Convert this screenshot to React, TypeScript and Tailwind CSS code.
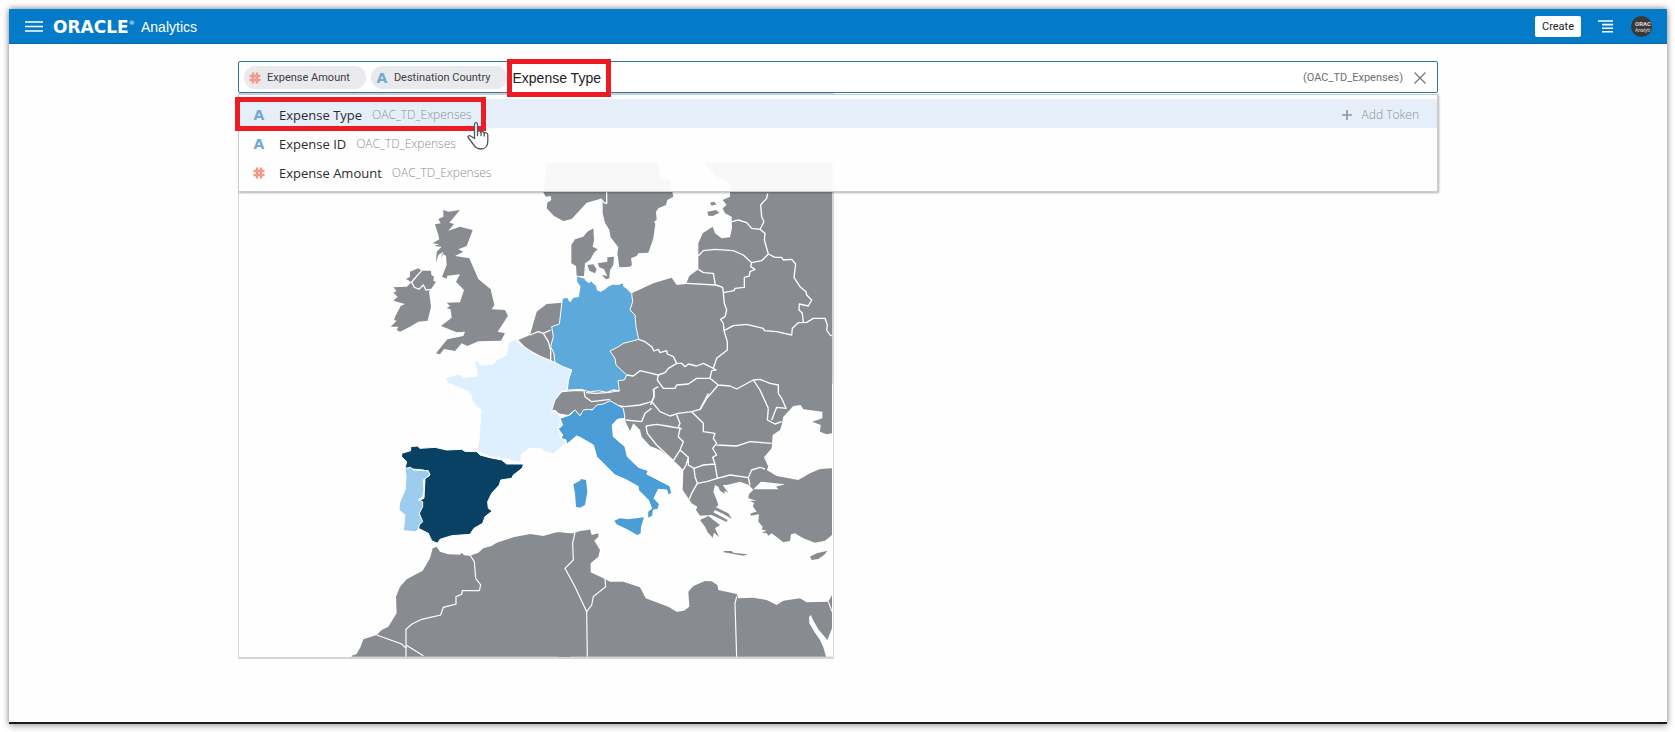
import React, { useState } from "react";

const LAND = "#888b90";
const SEA = "#fefefe";

function LetterIcon() {
  return (
    <span aria-hidden="true" className="font-['DejaVu_Sans',sans-serif] text-sm leading-4 font-bold text-[#72a9d0]">
      A
    </span>
  );
}

function NumberIcon() {
  return (
    <svg aria-hidden="true" viewBox="0 0 12 12" className="h-3 w-3" stroke="#f2998c" strokeWidth="2.4" fill="none">
      <path d="M4 0.5V11.5M8 0.5V11.5M0.5 4H11.5M0.5 8H11.5" />
    </svg>
  );
}

function FieldIcon({ kind }: { kind: "text" | "number" }) {
  return (
    <span className="flex w-3 shrink-0 items-center justify-center">
      {kind === "text" ? <LetterIcon /> : <NumberIcon />}
    </span>
  );
}

function Token({ kind, label }: { kind: "text" | "number"; label: string }) {
  return (
    <span className="flex h-[23px] shrink-0 items-center gap-[6px] rounded-full bg-[#e9eaed] pr-4 pl-[5px]">
      <FieldIcon kind={kind} />
      <span className="text-[11px] leading-4 whitespace-nowrap text-[#404040]">{label}</span>
    </span>
  );
}

const suggestions: { kind: "text" | "number"; name: string }[] = [
  { kind: "text", name: "Expense Type" },
  { kind: "text", name: "Expense ID" },
  { kind: "number", name: "Expense Amount" },
];

function EuropeMap() {
  return (
    <svg viewBox="239 94 594 563" className="block w-full" role="img" aria-label="Map of Europe">
      {/* British Isles */}
      <g transform="translate(230 180) scale(0.33333)" fill={LAND}>
        <polygon points="640,90 655,95 690,90 658,128 672,132 655,152 690,140 728,150 710,198 685,208 700,215 675,228 718,235 745,297 782,328 793,375 785,388 825,390 834,407 803,455 825,460 813,482 745,484 712,498 695,490 675,513 642,507 630,523 618,520 652,478 700,468 705,455 680,457 633,438 665,413 662,388 650,385 660,378 650,368 690,367 702,330 678,305 690,283 652,287 650,296 636,290 650,255 648,228 640,222 632,235 640,215 625,225 618,248 620,215 635,200 612,198 628,193 608,190 628,178 625,165 615,133 632,130 625,117 640,110" />
        <polygon points="490,322 530,320 545,307 528,297 540,290 540,275 565,265 575,272 603,272 604,285 612,290 610,303 618,305 605,325 597,335 603,380 593,422 565,425 540,440 510,455 500,450 505,440 482,440 500,422 492,420 498,405 512,378 525,372 490,362 503,350 490,338 500,333" />
        <path d="M575,272L550,300L545,307L553,322L567,328L580,315L588,330L605,328" fill="none" stroke="#fff" strokeWidth="4" />
      </g>

      {/* Northern and central Europe */}
      <g transform="translate(530 150) scale(0.33333)" fill={LAND}>
        <polygon points="50,38 385,38 390,80 420,90 430,140 412,150 408,165 385,175 378,185 380,210 372,215 376,222 370,265 355,308 325,310 320,318 303,325 306,345 300,350 268,352 262,310 265,292 242,262 238,240 225,218 218,190 218,158 212,146 170,158 150,180 125,207 100,213 72,198 50,175 52,158 64,150 62,138 47,140 40,127" />
        <polygon points="190,235 192,270 188,290 203,298 192,308 180,330 165,340 162,378 140,378 138,348 124,340 124,285 135,268 160,260 172,245" />
        <polygon points="172,345 190,343 200,358 195,370 178,362" />
        <polygon points="203,340 232,335 232,322 252,320 250,345 240,360 238,385 228,388 215,375 232,378 222,358 208,352" />
        <polygon points="540,158 552,155 560,163 545,167" />
        <polygon points="532,185 558,180 568,188 548,198 535,197" />
        <polygon points="520,38 907,38 907,700 880,760 40,780 65,760 112,720 62,636 0,600 -15,590 -35,570 0,555 20,485 50,462 97,458 120,470 200,440 305,430 370,400 425,383 440,405 468,402 478,378 505,358 505,280 518,250 548,230 555,250 575,265 600,262 606,235 605,200 595,195 585,190 578,175 590,165 578,150 600,140 600,100 560,80" />
      </g>

      {/* Switzerland */}
      <g transform="translate(380 330) scale(0.33333)" fill={LAND}>
        <polygon points="545,185 620,180 700,200 700,215 650,225 625,240 610,240 600,257 585,238 565,255 535,250 525,238 515,242 525,210" />
      </g>

      {/* Balkans, Turkey, Greece and the Black Sea */}
      <g transform="translate(560 370) scale(0.33333)" fill={LAND}>
        <polygon points="150,0 816,0 816,190 800,193 780,185 782,165 757,155 787,145 787,125 730,118 722,105 700,108 670,140 665,165 660,180 638,195 635,235 612,262 625,290 620,300 650,318 715,330 750,310 780,297 816,295 816,495 795,512 765,518 730,505 705,490 693,493 690,513 670,517 635,490 625,497 620,490 605,488 620,482 605,478 608,470 595,455 597,433 572,437 572,430 590,425 578,408 583,400 570,392 590,392 565,385 567,372 580,360 567,345 540,335 500,345 488,345 505,368 493,362 495,371 480,362 475,350 465,345 460,365 470,390 475,405 468,412 505,430 516,447 490,432 465,420 460,427 503,450 500,456 455,435 420,437 408,420 412,410 395,400 385,385 368,360 370,300 345,275 300,240 270,228 245,200 240,180 220,160 210,183 197,155 190,120" />
        <polygon points="420,450 445,438 480,465 465,475 477,501 462,488 458,503 443,487 435,470" />
        <polygon points="490,543 515,543 520,548 563,553 550,557 492,547" />
        <polygon points="750,560 770,550 803,542 792,555 775,567 755,570" />
        <polygon points="580,358 603,335 675,343 648,350 655,358" fill={SEA} />
      </g>

      {/* North Africa */}
      <g transform="translate(230 500) scale(0.33333)" fill={LAND}>
        <polygon points="365,467 380,462 392,440 400,418 440,405 455,390 475,380 500,340 498,290 510,260 530,238 578,212 600,175 608,145 620,140 630,155 655,163 690,164 696,158 702,166 720,167 745,158 760,145 785,138 800,128 850,112 900,102 940,108 980,97 1020,100 1020,470 365,470" />
        <path d="M720,165L733,185L737,235L752,255L748,272L697,272L695,283L678,290L678,312L640,322L632,345L575,358L545,373L528,388L528,470M440,405L515,432L528,445M528,435L580,467" fill="none" stroke="#fff" strokeWidth="3.5" />
      </g>
      <g transform="translate(560 370) scale(0.33333)" fill={LAND}>
        <polygon points="-5,487 25,490 40,490 60,483 85,480 90,478 95,495 115,490 115,500 103,512 120,540 115,560 92,580 92,607 135,627 150,635 190,635 240,652 257,685 325,710 350,725 372,722 388,710 385,665 400,648 435,633 455,634 472,645 475,660 530,672 535,685 580,683 620,690 650,705 670,692 720,685 740,697 805,695 816,675 816,860 -5,860" />
        <path d="M45,487L38,520L40,570L15,595L45,650L80,725L82,860M135,627L137,650L100,680L95,705L80,725M530,680L525,700L530,860M805,695L816,725" fill="none" stroke="#fff" strokeWidth="3.5" />
      </g>
      <g transform="translate(740 560) scale(0.33333)" fill={SEA}>
        <polygon points="207,170 213,165 218,178 235,208 262,240 276,205 276,290 258,290 250,262 240,240 225,218 208,190" />
      </g>

      {/* Country borders */}
      <g fill="none" stroke="#fff" strokeWidth="4" strokeLinejoin="round">
        <path
          transform="translate(530 150) scale(0.33333)"
          d="M230,125L230,160L222,158L212,146M0,555L25,545L40,550L62,540M40,550L55,575L62,600L62,635M468,400L558,405L578,412M505,358L520,368L550,370L556,405M505,318L520,302L555,298L610,302L640,315L665,338M606,215L625,210L650,218L665,235L690,238M713,130L710,145L692,165L695,200L702,215L690,238L705,250L703,270L715,312L695,332L665,338M715,312L735,322L755,322L760,330L785,328L797,342L792,382L810,410L828,425L830,435L845,450L835,468L808,462L807,480L817,490L820,517M665,338L662,350L675,358L660,365L658,378L643,382L643,412L615,415L612,422L580,428M578,412L580,428L583,460L590,480L585,500L572,508L580,520L582,542L610,527L650,523L700,535L703,542L740,545L785,555L787,535L805,518L830,517L850,505L885,505L892,525L890,540L900,555L907,558M582,542L592,575L592,600L560,625L550,655M326,568L345,575L365,590L372,603L385,598L390,608L410,602L412,612L430,620L440,640L455,640L465,650L475,642L500,648L520,640L550,655M440,640L415,655L405,668L385,675M290,675L310,678L330,662L355,668L385,675L382,690L400,715L435,715L440,705L475,702L500,685L540,685M550,655L558,660L545,662L540,685L565,705L530,745L510,780M385,710L370,718L372,740L362,765M565,705L600,708L620,717L670,690L690,688L720,700L745,705L745,730L755,745L768,775M670,690L690,720L715,775"
        />
        <path
          transform="translate(560 370) scale(0.33333)"
          d="M160,105L195,110L240,105L275,95L282,80L282,60M275,95L300,125L330,138L355,130L395,125L420,118L445,70M197,150L245,155L255,130L275,115M350,135L360,160L355,170L365,178M258,168L290,163L320,168L360,175L355,200L370,215L360,240L340,272M258,168L262,190L290,225L340,272M395,125L430,160L430,185L465,190L460,205L470,220L458,235L470,255L458,262L465,282M470,225L530,228L570,215L635,220M360,240L385,262L378,285L370,300M385,262L385,285L402,295L405,320L412,340L395,370L388,388M402,295L430,285L465,282L472,325L440,335L412,340M472,325L510,315L565,323L575,300L600,292L615,297M565,323L570,345M625,115L622,150L645,162L665,155M680,115L650,112L635,150"
        />
      </g>

      {/* Countries with expenses */}
      <g stroke="#fff" strokeWidth="3" strokeLinejoin="round">
        <polygon
          transform="translate(530 150) scale(0.33333)"
          fill="#5ea9dc"
          points="140,378 165,385 168,392 178,398 182,392 200,408 202,420 212,424 228,415 235,408 250,402 262,404 282,398 280,408 290,415 305,430 308,455 300,480 315,495 318,530 326,568 300,575 280,580 262,592 240,603 255,625 258,645 290,675 283,690 264,692 268,722 235,728 205,722 180,726 155,718 112,720 115,690 125,660 90,655 75,640 72,610 62,590 70,560 65,530 88,522 92,490 97,445 112,442 120,455 130,442 145,440 150,410 140,395"
        />
        <g transform="translate(380 330) scale(0.33333)">
          <polygon
            fill="#deeffe"
            points="385,40 405,27 415,38 430,50 460,70 525,97 545,108 575,120 565,150 560,182 545,185 525,210 515,242 535,250 545,270 535,295 545,325 558,338 520,372 495,365 485,357 450,355 425,372 422,397 380,388 330,380 290,362 297,330 303,240 285,225 275,210 275,197 265,185 235,172 205,160 195,145 235,132 255,142 292,137 290,118 282,92 297,95 300,105 340,102 350,90 380,75"
          />
          <polygon
            fill="#084163"
            points="65,370 92,362 92,350 112,348 120,355 165,352 200,360 245,358 255,364 290,365 300,375 330,383 365,390 380,402 430,402 428,412 420,420 400,435 395,445 362,450 358,465 335,490 323,515 325,535 337,543 315,560 308,580 282,595 270,613 215,617 180,628 172,640 155,632 145,610 115,595 120,510 132,505 135,445 150,435 130,420 75,415 80,395 65,380"
          />
          <polygon
            fill="#9dcdee"
            points="75,415 92,412 100,420 145,422 150,435 130,450 132,480 128,500 115,510 128,515 128,530 118,550 128,575 118,585 115,600 105,605 70,602 75,555 57,540 58,520 75,480 78,440"
          />
          <polygon
            fill="#4a9dd6"
            points="600,257 610,240 625,238 637,240 650,225 670,222 690,212 730,235 735,265 712,268 697,285 700,320 735,350 742,380 775,412 805,422 800,432 870,468 875,490 865,495 860,480 835,478 822,505 838,522 835,537 820,540 818,558 803,565 803,545 815,535 805,510 775,480 775,470 740,450 705,435 650,380 640,345 600,322 590,318 560,343 558,330 543,325 548,315 535,297 548,285 540,265 570,255 585,240"
          />
          <polygon fill="#4a9dd6" stroke="none" points="580,463 600,452 603,447 618,450 622,485 615,525 600,533 588,530 585,490" />
          <polygon fill="#4a9dd6" stroke="none" points="703,572 720,565 745,568 792,562 783,590 782,610 772,615 740,597 710,583" />
          <path
            fill="none"
            strokeWidth="4"
            d="M545,185L580,182L612,182L615,200L635,215L690,208M618,188L645,190L680,188L700,180L718,183"
          />
        </g>
      </g>
    </svg>
  );
}

function HandCursor() {
  return (
    <svg
      aria-hidden="true"
      viewBox="0 0 22 29"
      className="pointer-events-none absolute top-[60px] left-[229px] z-30 h-[29px] w-[22px]"
      fill="#fff"
      stroke="#55565c"
      strokeWidth="1.3"
      strokeLinejoin="round"
      strokeLinecap="round"
    >
      <path d="M7.5 17.500V3.500C7.500 1 10.500 1 10.500 3.500V11C11 9.500 14 9.500 14 11.500C14.500 10 17 10.500 17.200 12.500C18 11 20.800 11.500 20.800 14V20C20.800 25 18 28 14 28C10 28 8.500 26.500 6 23L1.200 16.500C.5 15 2.500 14 4 15.200Z" />
      <path d="M10.500 11V14.500M14 11.500V14.500M17.200 12.500V15" fill="none" />
    </svg>
  );
}

export default function App() {
  const [query, setQuery] = useState("Expense Type");

  return (
    <div className="flex min-h-screen bg-white pt-[9px] pr-2 pb-2 pl-[9px] font-['Roboto','Liberation_Sans',sans-serif]">
      <div className="flex flex-1 flex-col border-b-2 border-[#1b1b1d] bg-[#fefefe] shadow-[0_-1px_6px_rgba(0,0,0,0.4),0_3px_7px_rgba(0,0,0,0.2)]">
        <header className="flex h-[35px] items-center border-b border-[#0a68a8] bg-[#047bc9] pt-px pr-[15px] pl-4">
          <button type="button" aria-label="Navigator" className="flex h-5 w-[18px] items-center">
            <svg viewBox="0 0 18 11" className="h-[11px] w-[18px]" stroke="#fff" strokeWidth="1.5">
              <path d="M0 1H18M0 5.500H18M0 10H18" />
            </svg>
          </button>
          <div className="ml-[10px] flex w-[88px] items-center font-['DejaVu_Sans',sans-serif] text-[17px] leading-5 font-bold text-white">
            ORACLE
            <span className="-mt-2 text-[6px] leading-none font-normal">®</span>
          </div>
          <span className="font-['Liberation_Sans',sans-serif] text-sm leading-5 text-white">Analytics</span>
          <button
            type="button"
            className="ml-auto h-[21px] w-[46px] rounded-[2px] bg-white text-center text-[11px] leading-5 text-[#222]"
          >
            Create
          </button>
          <button type="button" aria-label="Page menu" className="ml-[17px] h-[13px] w-[15px]">
            <svg viewBox="0 0 15 13" className="h-[13px] w-[15px]" stroke="#fff" strokeWidth="1.6">
              <path d="M0 1H15M4 4.600H15M4 8.200H15M4 11.800H15" />
            </svg>
          </button>
          <button
            type="button"
            aria-label="Account"
            className="ml-[18px] flex h-[21px] w-[21px] flex-col justify-center rounded-full bg-[#3b3737] pl-1 text-left leading-[6px] text-[#e0dedd]"
          >
            <span className="text-[6px] font-bold">ORAC</span>
            <span className="text-[5px]">Analyti</span>
          </button>
        </header>

        <main className="mx-auto w-full max-w-[1200px] pt-[17px]">
          <div className="relative">
            <div className="flex h-8 items-center gap-[5px] rounded-[2px] border border-[#2a78a8] bg-white pt-px pr-[11px] pl-[5px]">
              <Token kind="number" label="Expense Amount" />
              <Token kind="text" label="Destination Country" />
              <input
                aria-label="Search"
                value={query}
                onChange={(e) => setQuery(e.target.value)}
                className="min-w-0 flex-1 bg-transparent pl-px font-['Liberation_Sans',sans-serif] text-sm leading-5 text-[#222] outline-none"
              />
              <span className="text-[11px] leading-4 text-[#6e6e6e]">(OAC_TD_Expenses)</span>
              <button type="button" aria-label="Clear search" className="ml-[6px] h-3 w-3">
                <svg viewBox="0 0 12 12" className="h-3 w-3" stroke="#777" strokeWidth="1.3">
                  <path d="M0.500 0.500L11.500 11.500M11.500 0.500L0.500 11.500" />
                </svg>
              </button>
            </div>

            <ul className="absolute inset-x-0 top-[33px] z-10 border border-[#cbcbd0] bg-[#fefefe]/95 pt-1 pb-[5px] font-['Open_Sans',sans-serif] shadow-[1px_1px_2px_rgba(0,0,0,0.3)]">
              {suggestions.map((s, i) => (
                <li key={s.name}>
                  <button
                    type="button"
                    className={`flex h-[29px] w-full items-center pt-[2px] pr-[18px] pl-[14px] text-left ${i === 0 ? "bg-[#e6eff9]" : ""}`}
                  >
                    <FieldIcon kind={s.kind} />
                    <span className="ml-[14px] text-[13px] leading-5 text-[#2c2c2c]">{s.name}</span>
                    <span className="ml-[10px] text-[12px] leading-5 font-light text-[#8b8f95]">OAC_TD_Expenses</span>
                    {i === 0 && (
                      <span className="ml-auto flex items-center gap-[10px] text-[12px] leading-5 font-light text-[#8b8f95]">
                        <svg aria-hidden="true" viewBox="0 0 10 10" className="h-[10px] w-[10px]" stroke="#8f959c" strokeWidth="1.6">
                          <path d="M5 0V10M0 5H10" />
                        </svg>
                        Add Token
                      </span>
                    )}
                  </button>
                </li>
              ))}
            </ul>

            <div className="pointer-events-none absolute top-[-2px] left-[269px] z-20 h-[38px] w-[104px] border-5 border-[#ed1c24]" />
            <div className="pointer-events-none absolute top-9 left-[-3px] z-20 h-[34px] w-[251px] border-5 border-[#ed1c24]" />
            <HandCursor />
          </div>

          <section className="w-full max-w-[596px] border border-b-2 border-[#d4d4da]">
            <EuropeMap />
          </section>
        </main>
      </div>
    </div>
  );
}
